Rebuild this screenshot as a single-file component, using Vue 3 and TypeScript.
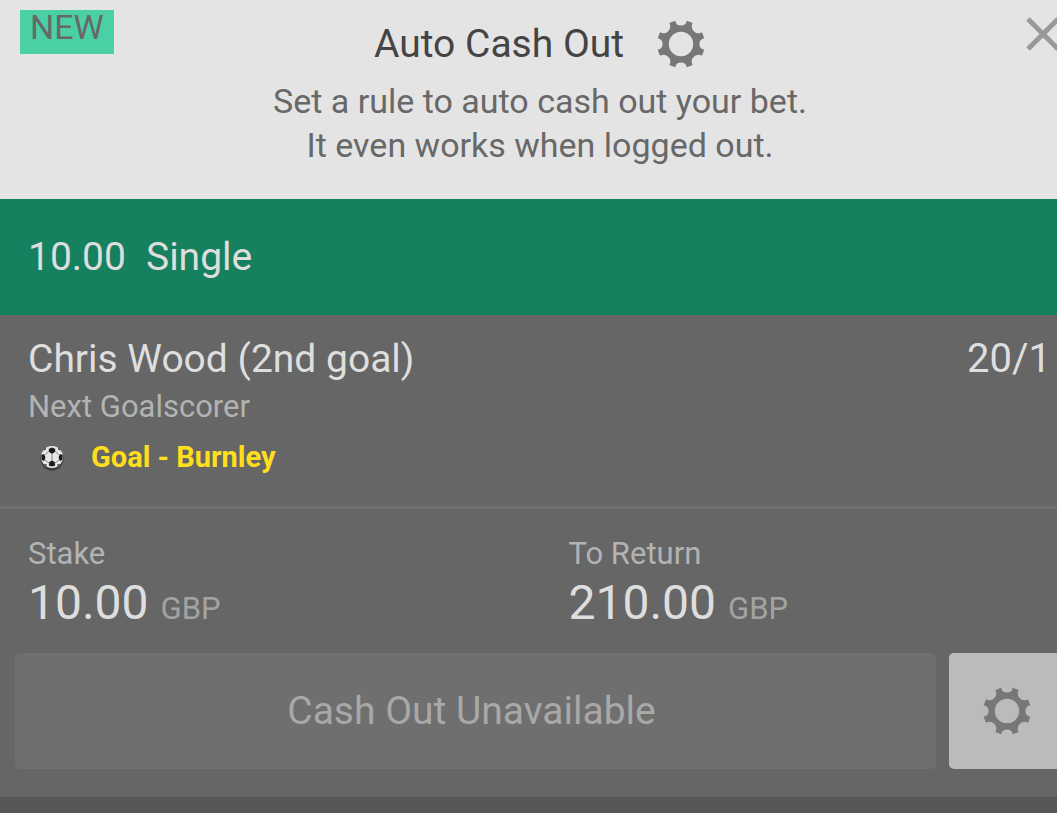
<script setup lang="ts">
interface Amount {
  label: string
  value: string
  currency: string
}

const amounts: Amount[] = [
  { label: 'Stake', value: '10.00', currency: 'GBP' },
  { label: 'To Return', value: '210.00', currency: 'GBP' },
]

const introLines: string[] = ['Set a rule to auto cash out your bet.', 'It even works when logged out.']

// Eight-toothed cog on a 50-unit canvas: scooped notches around a ring.
function cogPath(): string {
  const point = (degrees: number): string => {
    const a = (degrees * Math.PI) / 180
    return `${(25 + 24 * Math.sin(a)).toFixed(2)} ${(25 - 24 * Math.cos(a)).toFixed(2)}`
  }
  const half = (i: number): number => (i % 2 === 0 ? 14 : 16)
  let d = `M${point(-half(0))}`
  for (let i = 0; i < 8; i++) {
    const radius = i % 2 === 0 ? 5.9 : 6.9
    d += `A${radius} ${radius} 0 0 0 ${point(i * 45 + half(i))}`
    d += `L${point((i + 1) * 45 - half((i + 1) % 8))}`
  }
  return `${d}ZM25 12.8a12.2 12.2 0 1 0 0 24.4a12.2 12.2 0 1 0 0-24.4Z`
}

const cog = cogPath()
</script>

<template>
  <main class="slip">
    <header class="intro">
      <span class="badge">NEW</span>
      <h1 class="title">
        Auto Cash Out
        <svg class="cog" viewBox="0 0 50 50" aria-hidden="true"><path :d="cog" fill-rule="evenodd" /></svg>
      </h1>
      <p class="lead">
        <span v-for="line in introLines" :key="line">{{ line }}</span>
      </p>
      <button class="close" type="button" aria-label="Close">
        <svg viewBox="0 0 34 34" aria-hidden="true"><path d="M2 2L32 32M32 2L2 32" /></svg>
      </button>
    </header>

    <section class="bet-type">
      <span>10.00</span>
      <span>Single</span>
    </section>

    <section class="selection">
      <div class="row">
        <h2>Chris Wood (2nd goal)</h2>
        <span class="odds">20/1</span>
      </div>
      <p class="market">Next Goalscorer</p>
      <p class="event">
        <svg class="ball" viewBox="0 0 24 26" aria-hidden="true">
          <circle cx="12" cy="14" r="11.5" fill="#3c3c3c" />
          <circle cx="12" cy="12" r="11" fill="#e8e8e8" />
          <path d="M12 12L12 7M12 12L12 17M5 10L9 6M19 10L15 6M5 15L9 18M19 15L15 18" stroke="#8a8a8a" stroke-width="1" />
          <path
            d="M8.6 4L12 2.4L15.4 4L14.7 7.2L12 8.8L9.3 7.2ZM1.2 10L4 9L5.5 12.5L4.2 16L1.7 15ZM22.8 10L20 9L18.5 12.5L19.8 16L22.3 15ZM9.3 17L12 15.4L14.7 17L15.2 20.4L12 21.6L8.8 20.4ZM3.2 5.4L6.2 2.6L5.6 4.8ZM20.8 5.4L17.8 2.6L18.4 4.8ZM4 19L6 19L7.4 21.7ZM20 19L18 19L16.6 21.7Z"
            fill="#1c1c1c"
          />
        </svg>
        <strong>Goal - Burnley</strong>
      </p>
    </section>

    <section class="settle">
      <dl class="amounts">
        <div v-for="amount in amounts" :key="amount.label">
          <dt>{{ amount.label }}</dt>
          <dd>
            <span class="value">{{ amount.value }}</span>
            <span class="currency">{{ amount.currency }}</span>
          </dd>
        </div>
      </dl>
      <div class="actions">
        <button class="cash-out" type="button" disabled>Cash Out Unavailable</button>
        <button class="settings" type="button" aria-label="Auto cash out settings">
          <svg class="cog" viewBox="0 0 50 50" aria-hidden="true"><path :d="cog" fill-rule="evenodd" /></svg>
        </button>
      </div>
    </section>
  </main>
</template>

<style>
html {
  background: #565656;
}

body {
  margin: 0;
}

#app {
  overflow: hidden;
}
</style>

<style scoped>
.slip {
  margin-right: -23px;
  font-family: Roboto, "Liberation Sans", sans-serif;
  font-size: 31px;
  color: #dedede;
}

h1,
h2,
p,
dl,
dd {
  margin: 0;
  font-weight: 400;
}

button {
  border: 0;
  padding: 0;
  font: inherit;
}

.intro {
  position: relative;
  box-sizing: border-box;
  padding: 16px 0 32px;
  background: #e4e4e4;
  color: #686868;
  text-align: center;
}

.badge {
  position: absolute;
  top: 10px;
  left: 20px;
  height: 44px;
  box-sizing: border-box;
  padding: 0 10px;
  background: #4bd0a6;
  font-size: 34px;
  line-height: 34px;
}

.title {
  display: flex;
  align-items: center;
  justify-content: center;
  gap: 32px;
  font-size: 39px;
  line-height: 56px;
  color: #444;
}

.cog {
  display: block;
  width: 50px;
  height: 50px;
  fill: #777;
}

.lead {
  margin-top: 7px;
  font-size: 34px;
  line-height: 44px;
}

.lead span {
  display: block;
}

.close {
  position: absolute;
  top: 17px;
  right: 20px;
  width: 34px;
  height: 34px;
  background: none;
}

.close svg {
  display: block;
  stroke: #999;
  stroke-width: 5;
}

.bet-type {
  display: flex;
  gap: 20px;
  padding: 0 28px;
  background: #15815e;
  font-size: 39px;
  line-height: 116px;
}

.selection {
  padding: 20px 29px 23px 28px;
  background: #666;
  border-bottom: 3px solid #717171;
}

.row {
  display: flex;
  justify-content: space-between;
  font-size: 40px;
  line-height: 48px;
}

.row h2 {
  font-size: 39px;
}

.market {
  line-height: 48px;
  color: #b3b3b3;
}

.event {
  display: flex;
  align-items: center;
  gap: 27px;
  padding-left: 12px;
  font-size: 29px;
  line-height: 52px;
  color: #ffdf1b;
}

.ball {
  width: 24px;
  height: 26px;
  margin-top: 2px;
}

.settle {
  padding: 25px 15px 28px;
  background: #666;
}

.amounts {
  display: grid;
  grid-template-columns: calc(50% + 22px) 1fr;
  padding-left: 13px;
}

.amounts dt {
  line-height: 40px;
  color: #b3b3b3;
}

.amounts dd {
  display: flex;
  align-items: baseline;
  gap: 12px;
  line-height: 58px;
}

.value {
  font-size: 48px;
}

.currency {
  color: #a3a3a3;
}

.actions {
  display: flex;
  gap: 13px;
  margin-top: 15px;
}

.cash-out {
  flex: 1;
  height: 116px;
  padding-right: 8px;
  border-radius: 5px;
  background: #6f6f6f;
  font-size: 39px;
  color: #a8a8a8;
}

.settings {
  display: flex;
  align-items: center;
  justify-content: center;
  width: 116px;
  height: 116px;
  border-radius: 5px;
  background: #bbb;
}
</style>
